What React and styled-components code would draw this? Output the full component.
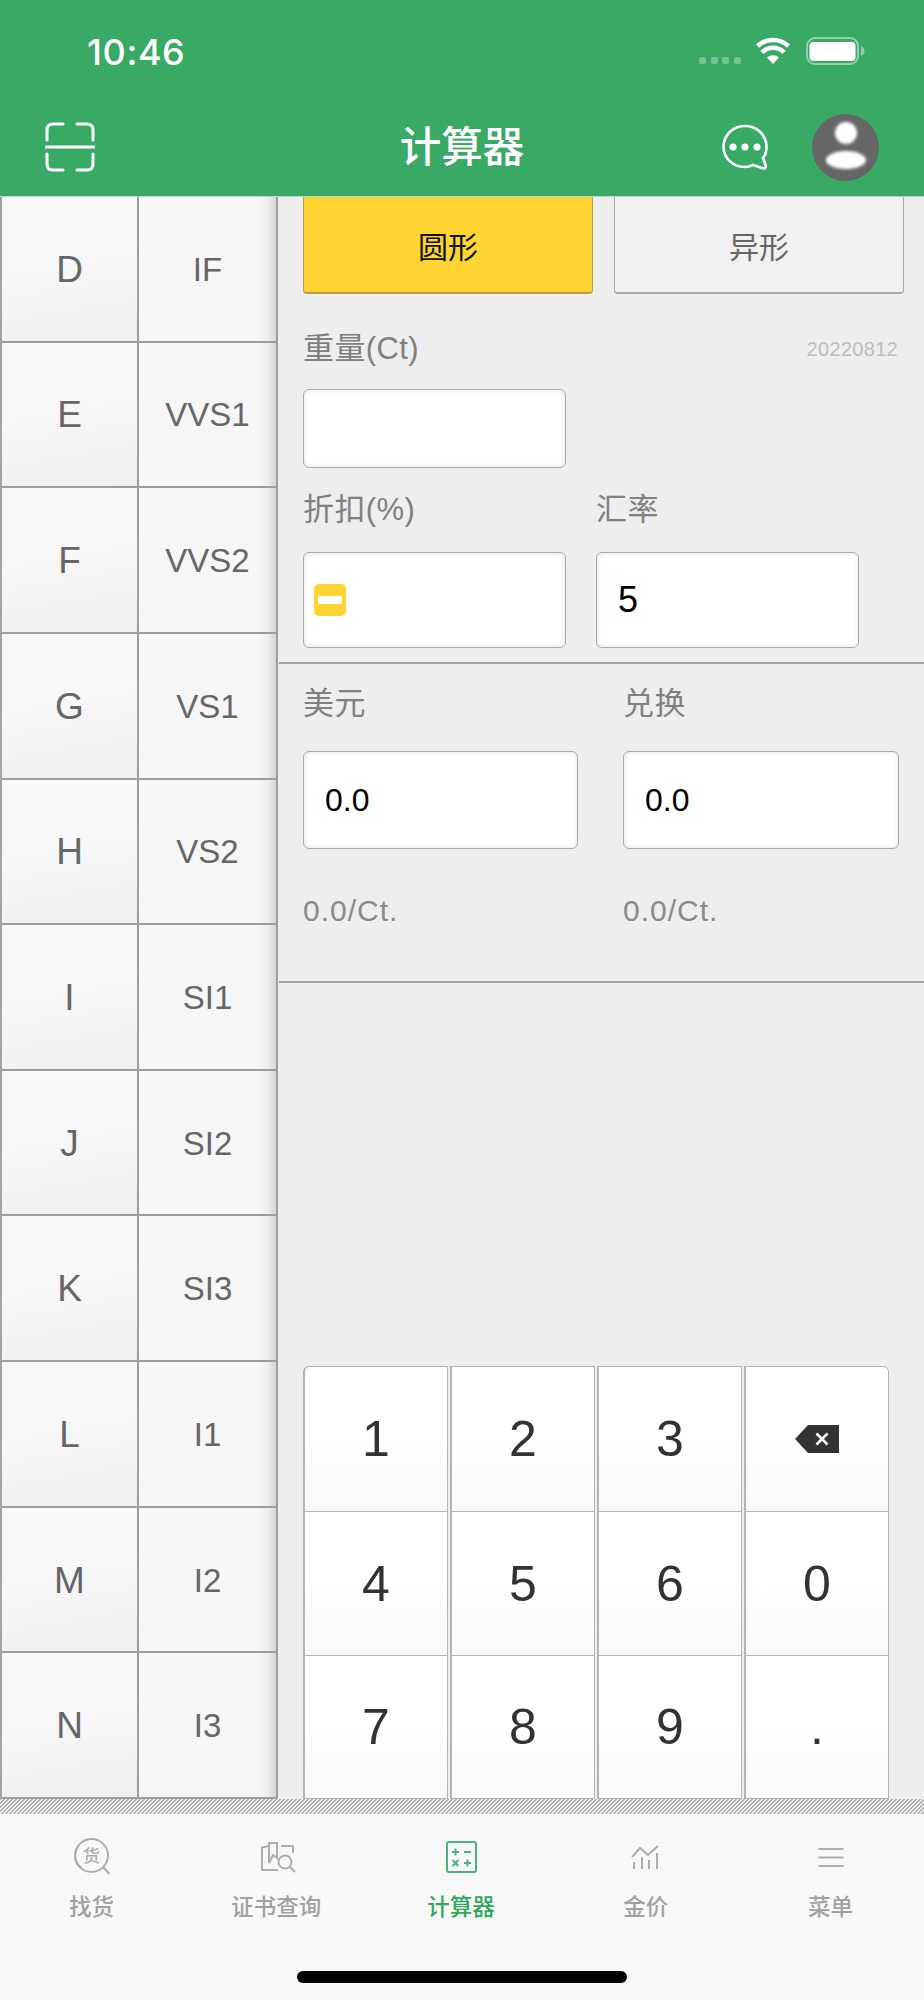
import React from "react";
import styled, { createGlobalStyle } from "styled-components";

const GlobalStyle = createGlobalStyle`
  * { box-sizing: border-box; }
  html, body { margin: 0; padding: 0; background: #eeeeee; }
  body { font-family: "Liberation Sans", "Noto Sans CJK SC", sans-serif; }
`;

const COLORS = ["D", "E", "F", "G", "H", "I", "J", "K", "L", "M", "N"];
const CLARITY = ["IF", "VVS1", "VVS2", "VS1", "VS2", "SI1", "SI2", "SI3", "I1", "I2", "I3"];
const KEYS = ["1", "2", "3", "back", "4", "5", "6", "0", "7", "8", "9", "."];

export default function App() {
  return (
    <Page>
      <GlobalStyle />
      <Header>
        <StatusBar>
          <Time>10:46</Time>
          <svg width="166" height="30" viewBox="0 0 166 30">
            <g fill="#fff" opacity="0.3">
              <rect x="0" y="20" width="7" height="7" rx="2" />
              <rect x="12" y="20" width="7" height="7" rx="2" />
              <rect x="23" y="20" width="7" height="7" rx="2" />
              <rect x="35" y="20" width="7" height="7" rx="2" />
            </g>
            <path d="M74 27 L68 20.5 A9 9 0 0 1 80 20.5 Z" fill="#fff" />
            <path d="M63 15.5 A15 15 0 0 1 85 15.5" fill="none" stroke="#fff" strokeWidth="4.5" />
            <path d="M58.5 9 A23 23 0 0 1 89.5 9" fill="none" stroke="#fff" strokeWidth="4.5" />
            <rect x="108" y="1" width="51" height="26" rx="8" fill="none" stroke="#fff" strokeOpacity="0.45" strokeWidth="2" />
            <rect x="110.5" y="5" width="46" height="19" rx="4" fill="#fff" />
            <path d="M162 9 C164.5 10 165.5 12 165.5 14 C165.5 16 164.5 18 162 19 Z" fill="#fff" opacity="0.45" />
          </svg>
        </StatusBar>
        <NavBar>
          <NavSide>
            <svg width="50" height="50" viewBox="0 0 50 50" fill="none" stroke="#fff" strokeWidth="3" strokeLinecap="round">
              <path d="M2 18 V8 Q2 2 8 2 H18" />
              <path d="M32 2 H42 Q48 2 48 8 V18" />
              <path d="M2 32 V42 Q2 48 8 48 H18" />
              <path d="M32 48 H42 Q48 48 48 42 V32" />
              <path d="M1 25 H49" />
            </svg>
          </NavSide>
          <Title>计算器</Title>
          <NavActions>
            <svg width="48" height="48" viewBox="0 0 48 48">
              <path
                d="M24 3 C12 3 2.5 12 2.5 24 C2.5 35 12 44 24 44 C27 44 30 43 32 42 L41 45 C44 46 45.5 45 44.5 42 L42 35 C44.5 32 45.5 28 45.5 24 C45.5 12 36 3 24 3 Z"
                fill="none"
                stroke="#fff"
                strokeWidth="2.6"
              />
              <circle cx="12" cy="24" r="3.6" fill="#fff" />
              <circle cx="24" cy="24" r="3.6" fill="#fff" />
              <circle cx="36" cy="24" r="3.6" fill="#fff" />
            </svg>
            <svg width="67" height="67" viewBox="0 0 67 67">
              <defs>
                <filter id="soft">
                  <feGaussianBlur stdDeviation="1.5" />
                </filter>
              </defs>
              <circle cx="33.5" cy="33.5" r="33.5" fill="#666666" />
              <circle cx="34" cy="19" r="11" fill="#fff" filter="url(#soft)" />
              <ellipse cx="34" cy="46" rx="20" ry="9" fill="#fff" filter="url(#soft)" />
            </svg>
          </NavActions>
        </NavBar>
      </Header>

      <Body>
        <GradeTable>
          {COLORS.map((c, i) => (
            <React.Fragment key={c}>
              <ColorCell>{c}</ColorCell>
              <ClarityCell>{CLARITY[i]}</ClarityCell>
            </React.Fragment>
          ))}
        </GradeTable>

        <Panel>
          <FormSection>
            <ShapeRow>
              <ShapeButton $active>圆形</ShapeButton>
              <ShapeButton>异形</ShapeButton>
            </ShapeRow>
            <WeightLabelRow>
              <FieldLabel>重量(Ct)</FieldLabel>
              <Version>20220812</Version>
            </WeightLabelRow>
            <WeightInput />
            <TwoFields>
              <Field>
                <FieldLabel>折扣(%)</FieldLabel>
                <RateInput>
                  <MinusBadge />
                </RateInput>
              </Field>
              <Field>
                <FieldLabel>汇率</FieldLabel>
                <RateInput>5</RateInput>
              </Field>
            </TwoFields>
          </FormSection>

          <ResultSection>
            <ResultField>
              <FieldLabel>美元</FieldLabel>
              <ResultInput>0.0</ResultInput>
              <PerCarat>0.0/Ct.</PerCarat>
            </ResultField>
            <ResultField>
              <FieldLabel>兑换</FieldLabel>
              <ResultInput>0.0</ResultInput>
              <PerCarat>0.0/Ct.</PerCarat>
            </ResultField>
          </ResultSection>

          <Keypad>
            {KEYS.map((k, i) => (
              <Key key={k} $corner={i === 0 ? "left" : i === 3 ? "right" : ""}>
                {k === "back" ? (
                  <svg width="44" height="28" viewBox="0 0 44 28">
                    <path d="M0 14 L13 0 H44 V28 H13 Z" fill="#333333" />
                    <path d="M21.5 8.5 L32.5 19.5 M32.5 8.5 L21.5 19.5" stroke="#fff" strokeWidth="2.6" />
                  </svg>
                ) : (
                  k
                )}
              </Key>
            ))}
          </Keypad>
        </Panel>
      </Body>

      <Hatch />

      <TabBar>
        <Tabs>
          <Tab>
            <TabIcon viewBox="0 0 44 44">
              <circle cx="21.5" cy="21.5" r="16.5" />
              <path d="M8 13 C3 20 5 30 12 34" />
              <path d="M33 33 L39.5 40" />
              <IconGlyph x="21.5" y="27.5">货</IconGlyph>
            </TabIcon>
            <TabLabel>找货</TabLabel>
          </Tab>
          <Tab>
            <TabIcon viewBox="0 0 44 44">
              <path d="M14 12 L7 13.5 V36 H23" />
              <path d="M14 29 V9 H22 V24 L18 21 L14 29" />
              <path d="M26 12 H38 V19" />
              <circle cx="30" cy="28" r="6.5" />
              <path d="M35 33 L40 38" />
            </TabIcon>
            <TabLabel>证书查询</TabLabel>
          </Tab>
          <Tab $active>
            <TabIcon viewBox="0 0 44 44">
              <rect x="7" y="8" width="29" height="30" rx="2" />
              <path d="M12 18 H19 M15.5 14.5 V21.5 M24 18 H31 M12.5 26 L18.5 32 M18.5 26 L12.5 32 M24 29 H31 M27.5 25.5 V32.5" />
            </TabIcon>
            <TabLabel>计算器</TabLabel>
          </Tab>
          <Tab>
            <TabIcon viewBox="0 0 44 44">
              <path d="M7 23 L15 14 L23 21 L33 12" />
              <path d="M9 28 V35 M17 23 V35 M24 26 V35 M32 19 V35" />
            </TabIcon>
            <TabLabel>金价</TabLabel>
          </Tab>
          <Tab>
            <TabIcon viewBox="0 0 44 44">
              <path d="M8.5 15 H33.5 M8.5 23.5 H33.5 M8.5 32 H33.5" />
            </TabIcon>
            <TabLabel>菜单</TabLabel>
          </Tab>
        </Tabs>
        <HomeIndicator />
      </TabBar>
    </Page>
  );
}

const Page = styled.div`
  width: 924px;
  height: 2000px;
  display: flex;
  flex-direction: column;
  overflow: hidden;
`;

const Header = styled.header`
  height: 197px;
  background: #38aa65;
  border-bottom: 1px solid #b9d8c4;
  color: #fff;
`;

const StatusBar = styled.div`
  height: 90px;
  padding: 24px 59px 10px 87px;
  display: flex;
  align-items: center;
  justify-content: space-between;
`;

const Time = styled.span`
  font-family: Inter, sans-serif;
  font-size: 36px;
  font-weight: 500;
  letter-spacing: 0.6px;
`;

const NavBar = styled.div`
  height: 106px;
  padding: 8px 45px 0;
  display: grid;
  grid-template-columns: 1fr auto 1fr;
  align-items: center;
`;

const NavSide = styled.div`
  display: flex;
`;

const NavActions = styled(NavSide)`
  justify-content: flex-end;
  align-items: center;
  gap: 43px;
`;

const Title = styled.h1`
  margin: 0 0 4px;
  font-family: "Noto Sans CJK SC", sans-serif;
  font-size: 41.5px;
  font-weight: 500;
  line-height: 1;
`;

const Body = styled.main`
  height: 1602px;
  display: flex;
`;

const GradeTable = styled.div`
  width: 278px;
  flex: none;
  display: grid;
  grid-template-columns: 137px 139px;
  grid-template-rows: repeat(11, 1fr);
  border-left: 2px solid #a3a3a3;
`;

const Cell = styled.div`
  display: flex;
  align-items: center;
  justify-content: center;
  padding-top: 2px;
  border-right: 2px solid #9d9d9d;
  border-bottom: 2px solid #9d9d9d;
  color: #666666;
`;

const ColorCell = styled(Cell)`
  font-size: 37px;
  background: linear-gradient(170deg, #f8f8f8 40%, #efefef 100%);
`;

const ClarityCell = styled(Cell)`
  font-size: 33px;
  background: linear-gradient(to right, #f6f6f6 88%, #ececec 95%, #d4d4d4 100%);
`;

const Panel = styled.section`
  flex: 1;
  display: flex;
  flex-direction: column;
  background: #eeeeee;
  margin-left: 1px;
`;

const FormSection = styled.div`
  padding: 0 20px 14px 24px;
  border-bottom: 2px solid #a2a2a2;
`;

const ShapeRow = styled.div`
  display: grid;
  grid-template-columns: 290px 290px;
  gap: 21px;
`;

const ShapeButton = styled.button`
  height: 97px;
  padding: 0;
  border: 1px solid ${(p) => (p.$active ? "#b8a04a" : "#aaaaaa")};
  border-top: none;
  border-bottom-width: 2px;
  border-radius: 0 0 4px 4px;
  background: ${(p) => (p.$active ? "#fdd431" : "#f1f1f1")};
  color: ${(p) => (p.$active ? "#111111" : "#666666")};
  font-family: "Noto Sans CJK SC", sans-serif;
  font-size: 30px;
`;

const WeightLabelRow = styled.div`
  margin-top: 35px;
  padding-right: 6px;
  display: flex;
  align-items: center;
  justify-content: space-between;
`;

const FieldLabel = styled.div`
  height: 40px;
  line-height: 40px;
  font-size: 31px;
  letter-spacing: 0.4px;
  color: #808080;
  white-space: nowrap;
`;

const Version = styled.span`
  font-size: 20px;
  letter-spacing: 0.3px;
  color: #bdbdbd;
`;

const InputBox = styled.div`
  display: flex;
  align-items: center;
  border: 1.5px solid #aaaaaa;
  border-radius: 6px;
  background: #fff;
  box-shadow: inset 0 0 5px rgba(0, 0, 0, 0.12);
  font-size: 32px;
  color: #000;
`;

const WeightInput = styled(InputBox)`
  width: 263px;
  height: 79px;
  margin-top: 20px;
`;

const TwoFields = styled.div`
  margin-top: 22px;
  display: grid;
  grid-template-columns: 263px 263px;
  gap: 30px;
`;

const Field = styled.div`
  min-width: 0;
`;

const RateInput = styled(InputBox)`
  height: 96px;
  margin-top: 22px;
  padding-left: 21px;
  font-size: 36px;
  &:has(span) {
    padding-left: 10px;
  }
`;

const MinusBadge = styled.span`
  width: 32px;
  height: 32px;
  border-radius: 5px;
  background: #fdd431;
  display: flex;
  align-items: center;
  justify-content: center;
  &::after {
    content: "";
    width: 24px;
    height: 8px;
    background: #fff;
  }
`;

const ResultSection = styled.div`
  padding: 20px 25px 50px 24px;
  display: grid;
  grid-template-columns: 275px 276px;
  gap: 45px;
  border-bottom: 2px solid #a2a2a2;
`;

const ResultField = styled.div`
  min-width: 0;
`;

const ResultInput = styled(InputBox)`
  height: 98px;
  margin-top: 27px;
  padding-left: 21px;
`;

const PerCarat = styled.div`
  margin-top: 42px;
  height: 40px;
  line-height: 40px;
  font-size: 30px;
  letter-spacing: 1px;
  color: #8a8a8a;
`;

const Keypad = styled.div`
  margin: auto 33px 0 24px;
  display: grid;
  grid-template-columns: repeat(4, 145px);
  grid-template-rows: 145px 144px 143px;
  column-gap: 2px;
`;

const Key = styled.div`
  display: flex;
  align-items: center;
  justify-content: center;
  border: 1.5px solid #b4b4b4;
  border-left-width: 2px;
  margin-top: -1px;
  border-radius: ${(p) =>
    p.$corner === "left" ? "6px 0 0 0" : p.$corner === "right" ? "0 6px 0 0" : "0"};
  background: linear-gradient(to bottom, #ffffff 50%, #f9f9f9 100%);
  font-size: 50px;
  color: #333333;
`;

const Hatch = styled.div`
  height: 15px;
  background: repeating-linear-gradient(135deg, #b0b0b0 0, #b0b0b0 1.4px, #eeeeee 1.4px, #eeeeee 2.828px);
`;

const TabBar = styled.nav`
  height: 186px;
  background: #f8f8f8;
  display: flex;
  flex-direction: column;
  align-items: center;
`;

const Tabs = styled.div`
  width: 100%;
  padding-top: 20px;
  display: grid;
  grid-template-columns: repeat(5, 1fr);
`;

const Tab = styled.div`
  display: flex;
  flex-direction: column;
  align-items: center;
  color: ${(p) => (p.$active ? "#2ea85f" : "#a0a0a0")};
`;

const TabIcon = styled.svg`
  width: 44px;
  height: 44px;
  fill: none;
  stroke: currentColor;
  stroke-width: 2;
  opacity: 0.85;
`;

const IconGlyph = styled.text`
  font-family: "Noto Sans CJK SC", sans-serif;
  font-size: 17px;
  font-weight: 500;
  text-anchor: middle;
  fill: currentColor;
  stroke: none;
`;

const TabLabel = styled.span`
  margin-top: 12px;
  height: 30px;
  line-height: 30px;
  font-family: "Noto Sans CJK SC", sans-serif;
  font-size: 22.5px;
  font-weight: 500;
  transform: translateX(-1px);
`;

const HomeIndicator = styled.div`
  width: 330px;
  height: 12px;
  margin-top: 51px;
  border-radius: 6px;
  background: #000;
`;
